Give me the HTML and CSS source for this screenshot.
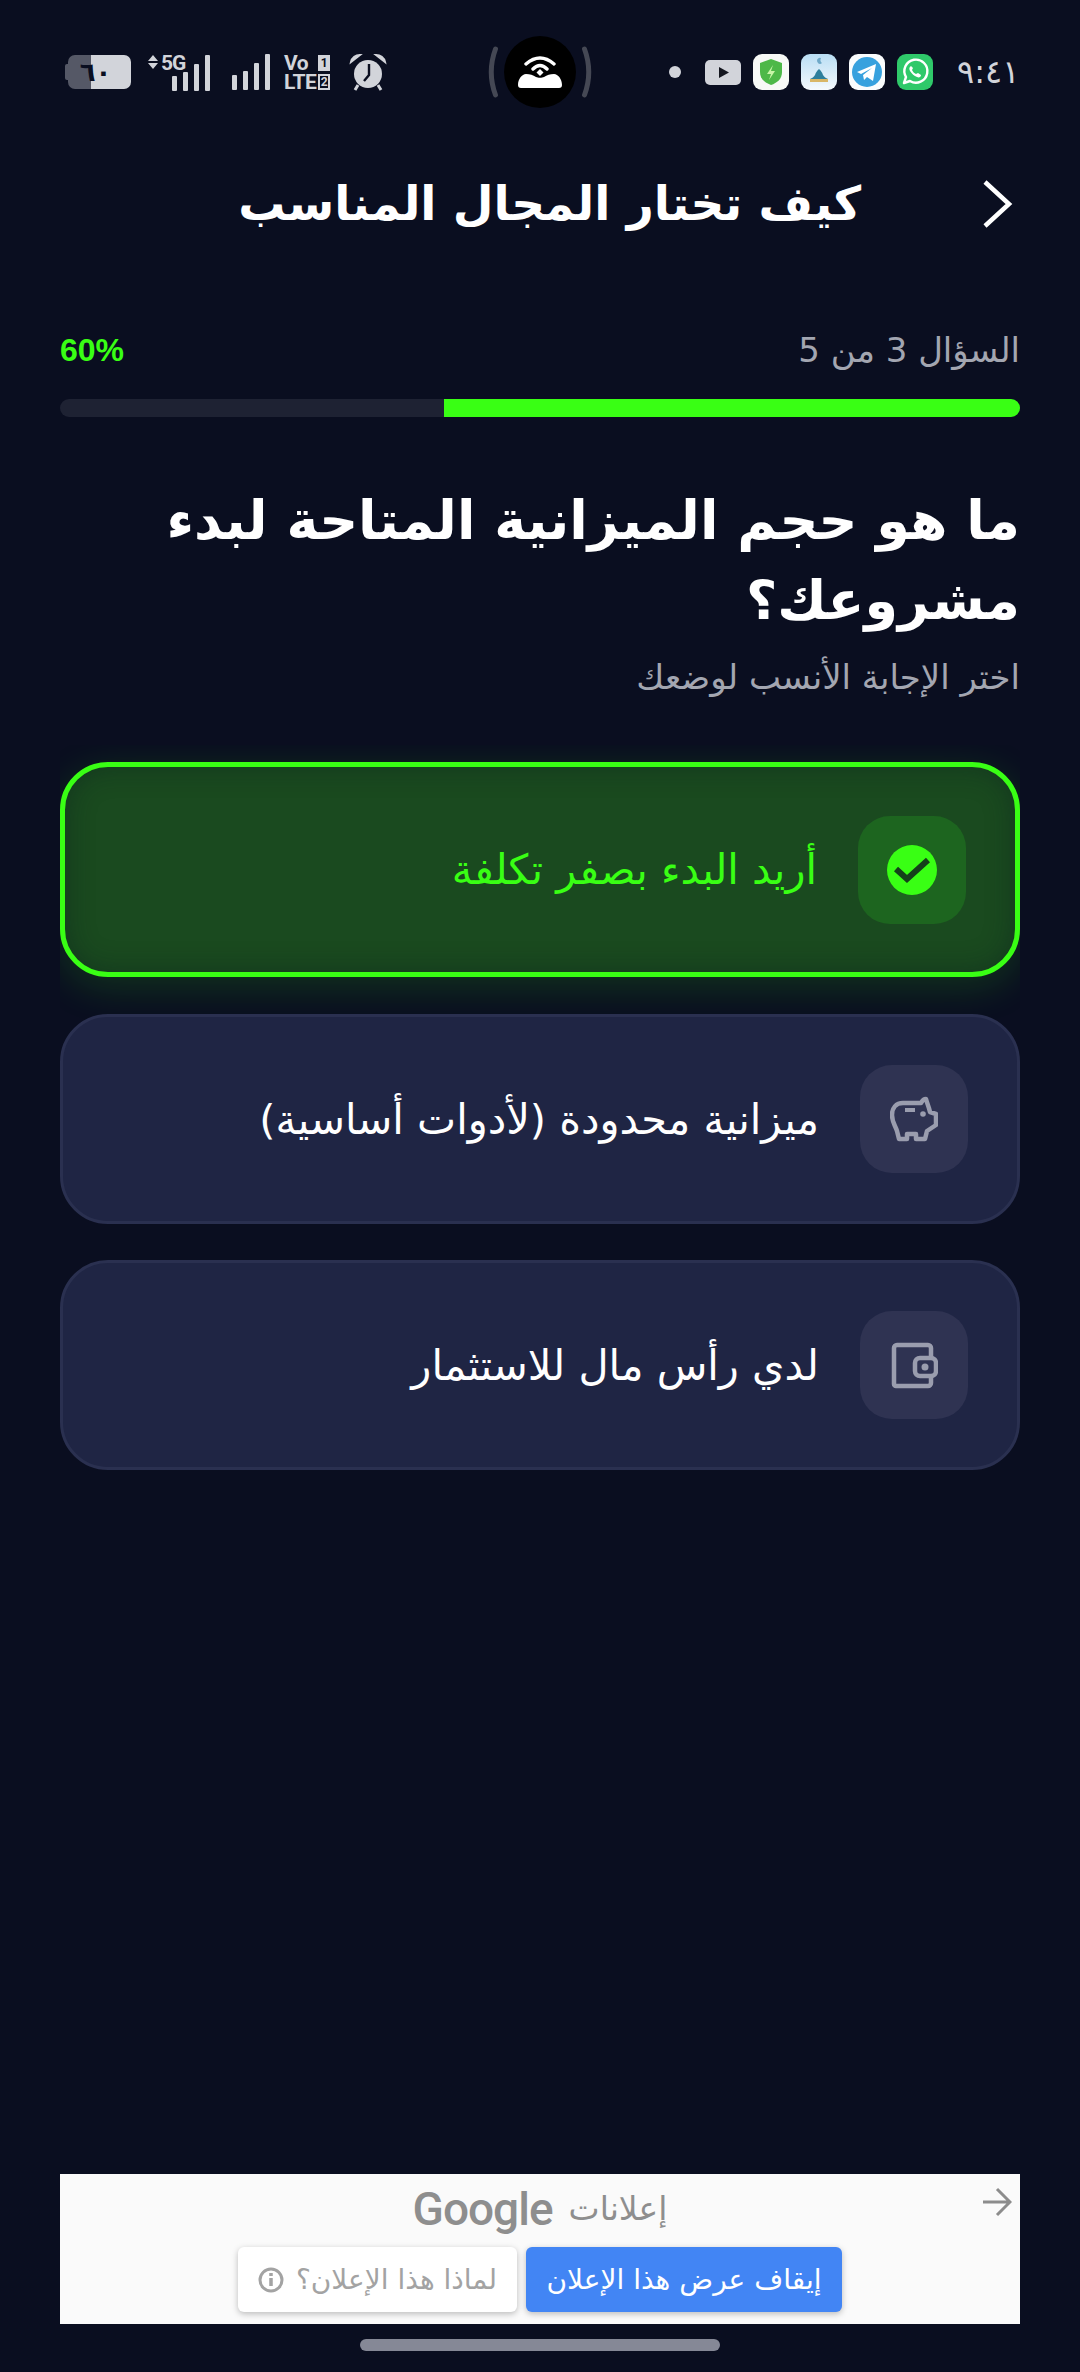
FILE: index.html
```html
<!DOCTYPE html>
<html lang="ar">
<head>
    <meta charset="UTF-8">
    <meta name="viewport" content="width=device-width, initial-scale=1.0">
    <title>كيف تختار المجال المناسب</title>
    <link rel="stylesheet" href="styles.css">
</head>
<body>

<div class="status-bar" dir="ltr">
    <div class="status-left">
        <div class="battery"><span class="battery-num">٦٠</span></div>
        <div class="net-five">
            <svg class="updown" width="10" height="14" viewBox="0 0 10 14"><path d="M5 0l5 6H0zM5 14l5-6H0z" fill="#d2d4da"/></svg>
            <span class="five-g">5G</span>
            <svg class="bars" width="38" height="36" viewBox="0 0 38 36"><g fill="#d2d4da"><rect y="21" width="5" height="15" rx="1"/><rect x="11" y="17" width="5" height="19" rx="1"/><rect x="22" y="9" width="5" height="27" rx="1"/><rect x="33" width="5" height="36" rx="1"/></g></svg>
        </div>
        <svg class="bars bars-two" width="38" height="36" viewBox="0 0 38 36"><g fill="#d2d4da"><rect y="21" width="5" height="15" rx="1"/><rect x="11" y="17" width="5" height="19" rx="1"/><rect x="22" y="9" width="5" height="27" rx="1"/><rect x="33" width="5" height="36" rx="1"/></g></svg>
        <div class="volte">
            <div class="volte-row"><span>Vo</span><i class="sim sim-fill">1</i></div>
            <div class="volte-row"><span>LTE</span><i class="sim">2</i></div>
        </div>
        <svg class="alarm" width="38" height="38" viewBox="0 0 38 38">
            <circle cx="19" cy="21" r="14" fill="#d2d4da"/>
            <path d="M2 9a9 9 0 0 1 9-7zM36 9a9 9 0 0 0-9-7z" fill="#d2d4da" stroke="#d2d4da" stroke-width="2"/>
            <path d="M9 32l-3 5M29 32l3 5" stroke="#d2d4da" stroke-width="3"/>
            <path d="M20 11v11l-5 6" fill="none" stroke="#0a0e20" stroke-width="2.4"/>
        </svg>
    </div>

    <div class="island">
        <svg class="bracket" width="11" height="52" viewBox="0 0 11 52"><path d="M8.500 3Q0 26 8.500 49" fill="none" stroke="#454854" stroke-width="5" stroke-linecap="round"/></svg>
        <div class="island-dot">
            <svg width="46" height="34" viewBox="0 0 46 34">
                <path d="M9 9Q23-3 37 9M16 14Q23 7 30 14" fill="none" stroke="#fff" stroke-width="3.400" stroke-linecap="round"/>
                <path d="M23 14l3.500 3.500L23 21l-3.500-3.500z" fill="#fff"/>
                <path d="M1 30c0-6 4-11 8-11 4 0 7 1 10 3 2 1 6 1 8 0 3-2 6-3 10-3 4 0 8 5 8 11 0 2-1 3-3 3H4c-2 0-3-1-3-3z" fill="#fff"/>
            </svg>
        </div>
        <svg class="bracket" width="11" height="52" viewBox="0 0 11 52"><path d="M2.500 3Q11 26 2.500 49" fill="none" stroke="#454854" stroke-width="5" stroke-linecap="round"/></svg>
    </div>

    <div class="status-right">
        <span class="notif-dot"></span>
        <svg class="tube" width="36" height="25" viewBox="0 0 36 25"><rect width="36" height="25" rx="5" fill="#d2d4da"/><path d="M14 7l10 5.500-10 5.500z" fill="#14161f"/></svg>
        <svg class="tile" width="36" height="36" viewBox="0 0 36 36"><rect width="36" height="36" rx="9" fill="#f7f9f6"/><path d="M18 5l11 4v9c0 7-5 11-11 13-6-2-11-6-11-13V9z" fill="#4db848"/><path d="M20 11l-6 9h4l-2 6 6-9h-4z" fill="#c8f5a8"/></svg>
        <svg class="tile" width="36" height="36" viewBox="0 0 36 36"><defs><linearGradient id="skyTile" x1="0" y1="0" x2="0" y2="1"><stop offset="0" stop-color="#b9def4"/><stop offset="1" stop-color="#f5f9fd"/></linearGradient></defs><rect width="36" height="36" rx="9" fill="url(#skyTile)"/><path d="M18 10v5c-2 2-3 3-4 6-1 2-3 3-5 4h18c-2-1-4-2-5-4-1-3-2-4-4-6z" fill="#2e7f9c"/><rect x="9" y="25" width="18" height="3" fill="#d9b667"/><path d="M20 4a3 3 0 1 0 1 5 4 4 0 0 1-1-5z" fill="#6fa9c8"/></svg>
        <svg class="tile" width="36" height="36" viewBox="0 0 36 36"><rect width="36" height="36" rx="9" fill="#fafcfd"/><circle cx="18" cy="18" r="15" fill="#37a1de"/><path d="M8 18l19-8-3 17-6-4-3 3-1-5 9-7-11 6z" fill="#fff"/></svg>
        <svg class="tile" width="36" height="36" viewBox="0 0 36 36"><rect width="36" height="36" rx="9" fill="#2fc96a"/><path d="M7 29l2-6a11.500 11.500 0 1 1 4 4z" fill="none" stroke="#fff" stroke-width="2.400" stroke-linejoin="round"/><path d="M14 12c-2 1-2 3-1 5 2 3 4 5 7 6 2 1 4 0 4-2l-3-2-2 1c-2-1-3-2-4-4l1-2z" fill="#fff"/></svg>
        <span class="clock">٩:٤١</span>
    </div>
</div>

<div class="top-bar">
    <svg class="back" width="32" height="50" viewBox="0 0 32 50"><path d="M4 3l24 22L4 47" fill="none" stroke="#fff" stroke-width="4.500"/></svg>
    <h1 class="page-title">كيف تختار المجال المناسب</h1>
</div>

<div class="progress-head">
    <span class="step-label">السؤال 3 من 5</span>
    <span class="step-percent">60%</span>
</div>
<div class="progress-track"><div class="progress-fill"></div></div>

<h2 class="question">ما هو حجم الميزانية المتاحة لبدء مشروعك؟</h2>
<p class="hint">اختر الإجابة الأنسب لوضعك</p>

<div class="options">
    <div class="option option-active">
        <div class="option-icon">
            <svg width="50" height="50" viewBox="0 0 50 50"><circle cx="25" cy="25" r="25" fill="#39ff14"/><path d="M9 24l11 10 21-19" fill="none" stroke="#14401a" stroke-width="6"/></svg>
        </div>
        <span class="option-text">أريد البدء بصفر تكلفة</span>
    </div>
    <div class="option">
        <div class="option-icon">
            <svg width="48" height="48" viewBox="0 0 48 48"><path d="M31 8H13C6 8 2 13 2 20c0 7 3 10 5 16l2 8h8v-5h9v5h9l2-8 9-6V19l-6-2c-1-5-3-9-4-13-2 0-4 2-5 4z" fill="none" stroke="#9a9dae" stroke-width="4.500" stroke-linejoin="round"/><path d="M15 15h10" stroke="#9a9dae" stroke-width="4"/><circle cx="33" cy="19" r="2.800" fill="#9a9dae"/></svg>
        </div>
        <span class="option-text">ميزانية محدودة (لأدوات أساسية)</span>
    </div>
    <div class="option">
        <div class="option-icon">
            <svg width="48" height="48" viewBox="0 0 48 48"><path d="M41 16V7a3 3 0 0 0-3-3H7a3 3 0 0 0-3 3v36a2 2 0 0 0 2 2h32a3 3 0 0 0 3-3v-7" fill="none" stroke="#9a9dae" stroke-width="4.500"/><rect x="25" y="17" width="21" height="18" rx="5" fill="none" stroke="#9a9dae" stroke-width="4.500"/><circle cx="35" cy="26" r="3.500" fill="#9a9dae"/></svg>
        </div>
        <span class="option-text">لدي رأس مال للاستثمار</span>
    </div>
</div>

<div class="ad-box">
    <svg class="ad-arrow" width="30" height="30" viewBox="0 0 30 30"><path d="M1 15h27M15 2l13 13-13 13" fill="none" stroke="#8c8c8c" stroke-width="3"/></svg>
    <div class="ad-brand"><span class="ad-word">إعلانات</span><span class="ad-google">Google</span></div>
    <div class="ad-actions">
        <button class="ad-btn ad-stop">إيقاف عرض هذا الإعلان</button>
        <button class="ad-btn ad-why">لماذا هذا الإعلان؟
            <svg width="26" height="26" viewBox="0 0 26 26"><circle cx="13" cy="13" r="11" fill="none" stroke="#a3a3a3" stroke-width="3"/><path d="M13 11v8M13 6v3" stroke="#a3a3a3" stroke-width="3.500"/></svg>
        </button>
    </div>
</div>

<div class="home-pill"></div>

</body>
</html>
```

FILE: styles.css
```css
* {
    box-sizing: border-box;
}
body {
    margin: 0;
    width: 1080px;
    height: 2372px;
    display: flex;
    flex-direction: column;
    background: #0a0e20;
    color: #fff;
    direction: rtl;
    font-family: "DejaVu Sans", sans-serif;
    overflow: hidden;
}

/* status bar */
.status-bar {
    display: flex;
    align-items: center;
    height: 72px;
    margin-top: 36px;
    padding: 0 0 0 65px;
    direction: ltr;
}
.status-left, .status-right {
    display: flex;
    align-items: center;
    flex: none;
}
.status-left {
    width: 422px;
}
.battery {
    position: relative;
    width: 63px;
    height: 34px;
    margin-left: 3px;
    padding-right: 8px;
    border-radius: 7px;
    background: linear-gradient(to right, #555866 37%, #d2d4da 37%);
    display: flex;
    align-items: center;
    justify-content: center;
    margin-right: 17px;
}
.battery::before {
    content: "";
    position: absolute;
    left: -3px;
    top: 9px;
    width: 3px;
    height: 16px;
    border-radius: 2px 0 0 2px;
    background: #555866;
}
.battery-num {
    color: #0a0e20;
    font-size: 26px;
    font-weight: bold;
    line-height: 34px;
}
.net-five {
    position: relative;
    width: 62px;
    height: 37px;
    display: flex;
    justify-content: flex-end;
    align-items: flex-end;
    margin-right: 22px;
}
.updown {
    position: absolute;
    left: 0;
    top: 1px;
}
.five-g {
    position: absolute;
    left: 13px;
    top: -3px;
    color: #d2d4da;
    font: bold 21px/24px "Roboto", sans-serif;
    letter-spacing: -1px;
}
.volte {
    margin-left: 14px;
    width: 46px;
    color: #d2d4da;
    font: bold 21px/20px "Roboto", sans-serif;
}
.volte-row {
    display: flex;
    justify-content: space-between;
    align-items: center;
    height: 19px;
    letter-spacing: -0.5px;
}
.sim {
    width: 12px;
    height: 16px;
    border: 2px solid #d2d4da;
    font: bold 12px/12px "Roboto", sans-serif;
    text-align: center;
    flex: none;
}
.sim-fill {
    background: #d2d4da;
    color: #0a0e20;
}
.alarm {
    margin-left: 19px;
}
.island {
    display: flex;
    align-items: center;
    gap: 6px;
    width: 106px;
    flex: none;
}
.bracket {
    flex: none;
}
.island-dot {
    width: 72px;
    height: 72px;
    border-radius: 50%;
    background: #000;
    display: flex;
    align-items: center;
    justify-content: center;
    flex: none;
}
.status-right {
    margin-left: 76px;
}
.notif-dot {
    width: 12px;
    height: 12px;
    border-radius: 50%;
    background: #d2d4da;
    margin-right: 24px;
}
.tube {
    margin-right: 12px;
}
.tile {
    margin-right: 12px;
}
.clock {
    margin-left: 12px;
    color: #d2d4da;
    font-size: 32px;
    line-height: 36px;
}

/* title row */
.top-bar {
    display: flex;
    align-items: center;
    gap: 120px;
    height: 66px;
    margin-top: 63px;
    padding: 0 67px;
}
.page-title {
    margin: 0;
    font-size: 47px;
    font-weight: bold;
    line-height: 66px;
    white-space: nowrap;
}

/* progress */
.progress-head {
    display: flex;
    justify-content: space-between;
    align-items: center;
    height: 44px;
    margin: 91px 60px 0;
}
.step-label {
    color: #a3a6b1;
    font-size: 34px;
}
.step-percent {
    color: #39ff14;
    font-size: 32px;
    font-weight: bold;
    font-family: "Liberation Sans Narrow", "Liberation Sans", sans-serif;
}
.progress-track {
    height: 18px;
    margin: 27px 60px 0;
    border-radius: 9px;
    background: #1e2233;
    overflow: hidden;
}
.progress-fill {
    width: 60%;
    height: 100%;
    background: #39ff14;
}

/* question */
.question {
    margin: 64px 60px 0;
    font-size: 54px;
    font-weight: bold;
    line-height: 80px;
}
.hint {
    margin: 14px 60px 0;
    color: #a3a6b1;
    font-size: 34px;
    line-height: 44px;
}

/* answers */
.options {
    display: flex;
    flex-direction: column;
    gap: 36px;
    margin: 46px 60px 0;
    padding-top: 17px;
    padding-bottom: 4px;
    overflow: hidden;
}
.option {
    display: flex;
    align-items: center;
    gap: 41px;
    height: 210px;
    padding: 0 49px;
    background: #1f2544;
    border: 3px solid #2a3050;
    border-radius: 48px;
}
.option-active {
    height: 215px;
    padding: 0 49px;
    margin-bottom: 1px;
    background: #1a4a1f;
    border: 5px solid #39ff14;
    box-shadow: 0 10px 40px rgba(57, 255, 20, 0.16), inset 0 0 28px rgba(10, 30, 30, 0.45);
}
.option-icon {
    width: 108px;
    height: 108px;
    border-radius: 32px;
    background: #2f3352;
    display: flex;
    align-items: center;
    justify-content: center;
    flex: none;
}
.option-active .option-icon {
    background: #1d651f;
}
.option-text {
    font-size: 41.500px;
    color: #fff;
    white-space: nowrap;
}
.option-active .option-text {
    color: #39ff14;
}

/* ad */
.ad-box {
    position: relative;
    height: 150px;
    margin: auto 60px 0;
    background: #fafafa;
}
.ad-arrow {
    position: absolute;
    top: 13px;
    right: 8px;
}
.ad-brand {
    display: flex;
    align-items: center;
    justify-content: center;
    gap: 16px;
    height: 73px;
    padding-bottom: 4px;
}
.ad-word {
    color: #8e8e8e;
    font-size: 33px;
}
.ad-google {
    color: #8e8e8e;
    font: 500 46px "Roboto", sans-serif;
    letter-spacing: -1px;
}
.ad-actions {
    display: flex;
    justify-content: center;
    gap: 9px;
}
.ad-btn {
    height: 65px;
    border: none;
    border-radius: 6px;
    font-family: "DejaVu Sans", sans-serif;
    font-size: 28px;
    box-shadow: 0 2px 6px rgba(0, 0, 0, 0.25);
    padding: 0;
    display: flex;
    align-items: center;
    justify-content: center;
    gap: 12px;
    white-space: nowrap;
}
.ad-stop {
    width: 316px;
    background: #4285f4;
    color: #fff;
}
.ad-why {
    width: 279px;
    background: #fff;
    color: #a3a3a3;
}

.home-pill {
    width: 360px;
    height: 12px;
    margin: 15px auto 21px;
    border-radius: 6px;
    background: #858896;
}
```
